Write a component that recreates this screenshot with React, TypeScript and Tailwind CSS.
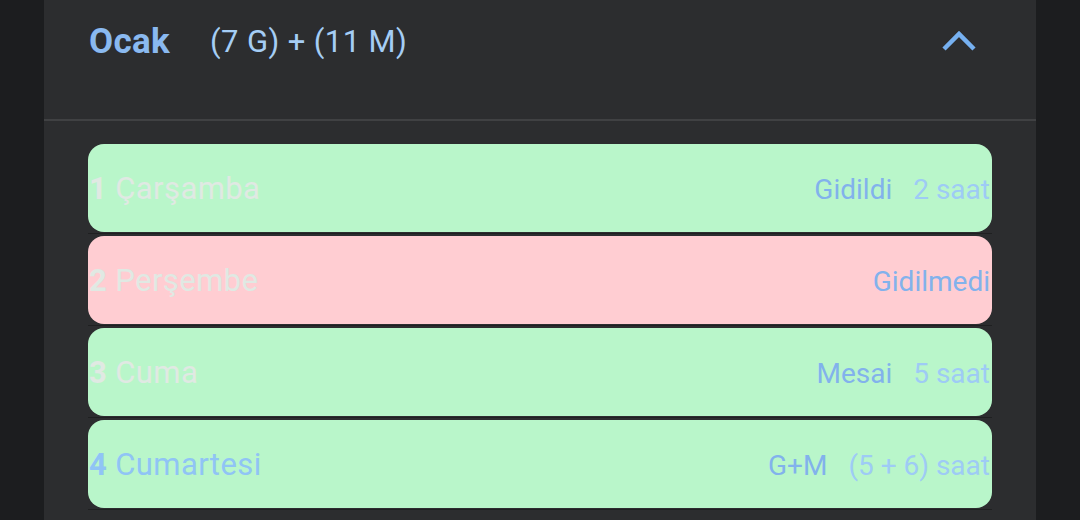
const days = [
  { no: 1, name: "Çarşamba", status: "Gidildi", hours: "2 saat", tone: "green", active: false },
  { no: 2, name: "Perşembe", status: "Gidilmedi", hours: "", tone: "red", active: false },
  { no: 3, name: "Cuma", status: "Mesai", hours: "5 saat", tone: "green", active: false },
  { no: 4, name: "Cumartesi", status: "G+M", hours: "(5 + 6) saat", tone: "green", active: true },
];

export default function App() {
  return (
    <div className="w-[1080px] h-[520px] overflow-hidden bg-[#1c1d1f] flex justify-center font-['Roboto',sans-serif]">
      <div className="w-[992px] h-full bg-[#2c2d2f] flex flex-col">
        {/* ay başlığı */}
        <div className="h-[119px] flex items-start pt-[20px] pl-[45px] pr-[58px]">
          <span className="text-[35px] font-bold text-[#8ab9f0] leading-[44px] tracking-[0.3px]">Ocak</span>
          <span className="ml-[40px] text-[31px] text-[#a5cdf5] leading-[44px] tracking-[0.4px]">(7 G) + (11 M)</span>
          <svg className="ml-auto mt-[8px]" width="38" height="26" viewBox="0 0 38 26">
            <polyline points="4,21 19,6 34,21" fill="none" stroke="#76b0f0" strokeWidth="4.5" />
          </svg>
        </div>
        <div className="h-[2px] bg-[#404143]" />

        <div className="pt-[23px] px-[44px] flex flex-col">
          {days.map((d) => (
            <div key={d.no} className="mb-[2px]">
              <div
                className={
                  "h-[88px] rounded-[16px] flex items-center pt-[3px] " +
                  (d.tone === "green" ? "bg-[#b9f6ca]" : "bg-[#ffcdd2]")
                }
              >
                <span
                  className={
                    "text-[31px] pl-[1px] tracking-[0.4px] " +
                    (d.active ? "text-[#90c4f5]" : "text-[#e0e9e3]")
                  }
                >
                  <b className="font-bold">{d.no}</b> {d.name}
                </span>
                <span className="ml-auto text-[28px] text-[#82b2ec] pr-[2px] whitespace-nowrap">
                  {d.status}
                  {d.hours && <span className="ml-[21px] text-[#9ecbf5]">{d.hours}</span>}
                </span>
              </div>
              <div className="h-px mt-px bg-[#1f2021]" />
            </div>
          ))}
        </div>
      </div>
    </div>
  );
}
